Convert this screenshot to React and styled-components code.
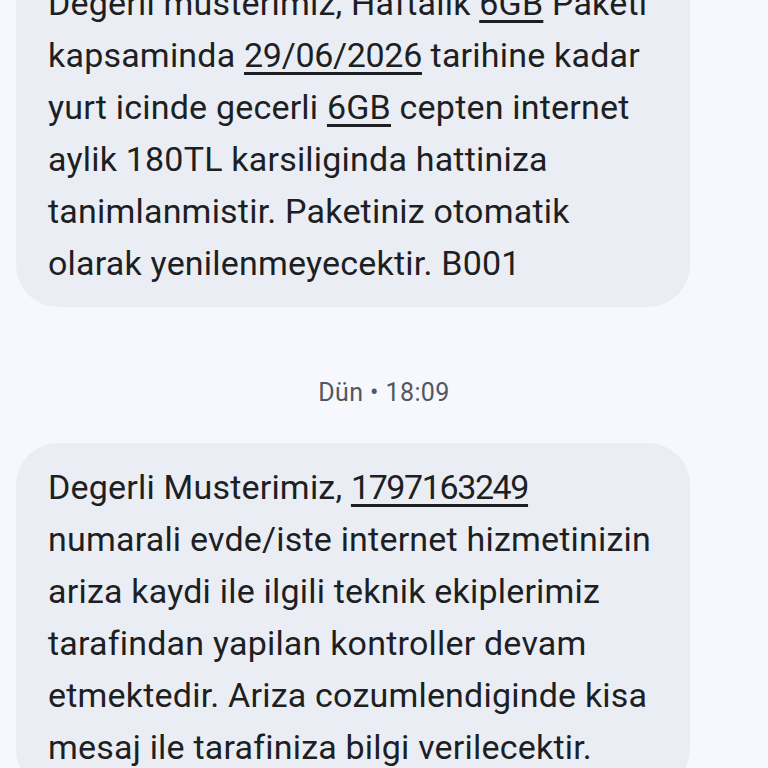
import React from "react";
import styled, { createGlobalStyle } from "styled-components";

const Global = createGlobalStyle`
  html, body { margin: 0; padding: 0; background: #f7f8fd; overflow: hidden; }
  body { font-family: Roboto, "Noto Sans", "Liberation Sans", sans-serif; }
`;

const Thread = styled.div`
  display: flex;
  flex-direction: column;
  align-items: flex-start;
  padding: 0 16px;
  margin-top: -41px;
  height: 809px;
  overflow: hidden;
`;

const Bubble = styled.div`
  box-sizing: border-box;
  width: 674px;
  background: #eaedf4;
  border-radius: 42px;
  padding: 18px 32px 18px 32px;
  color: #1d1f23;
  font-size: 34px;
  line-height: 52px;
  letter-spacing: 0.2px;
`;

const Line = styled.div`
  white-space: nowrap;
`;

const Link = styled.span`
  text-decoration: underline;
  text-decoration-thickness: 2.5px;
  text-underline-offset: 5px;
  letter-spacing: ${(p) => p.$tight || "0.2px"};
`;

const Stamp = styled.div`
  align-self: center;
  margin: 71px 0 35px;
  height: 30px;
  line-height: 30px;
  font-size: 25px;
  letter-spacing: 0.4px;
  color: #53575d;
`;

export default function App() {
  return (
    <>
      <Global />
      <Thread>
        <Bubble>
          <Line>Degerli musterimiz, Haftalik <Link>6GB</Link> Paketi</Line>
          <Line>kapsaminda <Link $tight="-0.3px">29/06/2026</Link> tarihine kadar</Line>
          <Line>yurt icinde gecerli <Link>6GB</Link> cepten internet</Line>
          <Line>aylik 180TL karsiliginda hattiniza</Line>
          <Line>tanimlanmistir. Paketiniz otomatik</Line>
          <Line>olarak yenilenmeyecektir. B001</Line>
        </Bubble>
        <Stamp>Dün • 18:09</Stamp>
        <Bubble>
          <Line>Degerli Musterimiz, <Link $tight="-1.4px">1797163249</Link></Line>
          <Line>numarali evde/iste internet hizmetinizin</Line>
          <Line>ariza kaydi ile ilgili teknik ekiplerimiz</Line>
          <Line>tarafindan yapilan kontroller devam</Line>
          <Line>etmektedir. Ariza cozumlendiginde kisa</Line>
          <Line>mesaj ile tarafiniza bilgi verilecektir.</Line>
        </Bubble>
      </Thread>
    </>
  );
}
